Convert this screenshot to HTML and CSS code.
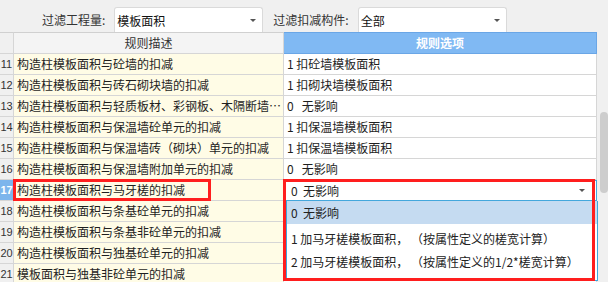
FILE: index.html
```html
<!DOCTYPE html>
<html lang="zh-CN">
<head>
<meta charset="utf-8">
<title>扣减规则</title>
<link rel="stylesheet" href="styles.css">
</head>
<body>
<div class="topbar">
  <span class="label">过滤工程量:</span>
  <div class="combo"><span>模板面积</span><i class="caret"></i></div>
  <span class="label">过滤扣减构件:</span>
  <div class="combo"><span>全部</span><i class="caret"></i></div>
</div>
<div class="main">
  <div class="grid">
    <div class="cell num hd"></div>
    <div class="cell hd hd-desc">规则描述</div>
    <div class="cell hd hd-opt">规则选项</div>

    <div class="cell num">11</div>
    <div class="cell desc">构造柱模板面积与砼墙的扣减</div>
    <div class="cell opt">1 扣砼墙模板面积</div>

    <div class="cell num">12</div>
    <div class="cell desc">构造柱模板面积与砖石砌块墙的扣减</div>
    <div class="cell opt">1 扣砌块墙模板面积</div>

    <div class="cell num">13</div>
    <div class="cell desc">构造柱模板面积与轻质板材、彩钢板、木隔断墙的扣减</div>
    <div class="cell opt">0   无影响</div>

    <div class="cell num">14</div>
    <div class="cell desc">构造柱模板面积与保温墙砼单元的扣减</div>
    <div class="cell opt">1 扣保温墙模板面积</div>

    <div class="cell num">15</div>
    <div class="cell desc">构造柱模板面积与保温墙砖（砌块）单元的扣减</div>
    <div class="cell opt">1 扣保温墙模板面积</div>

    <div class="cell num">16</div>
    <div class="cell desc">构造柱模板面积与保温墙附加单元的扣减</div>
    <div class="cell opt">0   无影响</div>

    <div class="cell num active">17</div>
    <div class="cell desc">构造柱模板面积与马牙槎的扣减</div>
    <div class="cell opt editing"><div class="edit"><span class="edit-text">0  无影响</span><i class="caret"></i></div></div>

    <div class="cell num">18</div>
    <div class="cell desc">构造柱模板面积与条基砼单元的扣减</div>
    <div class="cell opt">1 扣条基模板面积</div>

    <div class="cell num">19</div>
    <div class="cell desc">构造柱模板面积与条基非砼单元的扣减</div>
    <div class="cell opt">0   无影响</div>

    <div class="cell num">20</div>
    <div class="cell desc">构造柱模板面积与独基砼单元的扣减</div>
    <div class="cell opt">1 扣独基模板面积</div>

    <div class="cell num">21</div>
    <div class="cell desc">模板面积与独基非砼单元的扣减</div>
    <div class="cell opt">0   无影响</div>
  </div>
  <div class="scroll"><div class="thumb"></div></div>

  <ul class="list">
    <li class="item sel">0  无影响</li>
    <li class="item gap">1 加马牙槎模板面积， （按属性定义的槎宽计算）</li>
    <li class="item">2 加马牙槎模板面积， （按属性定义的1/2*槎宽计算）</li>
  </ul>
  <div class="mark mark-left"></div>
  <div class="mark mark-right"></div>
</div>
</body>
</html>
```
FILE: styles.css
```css
html, body {
  margin: 0;
  padding: 0;
}
body {
  width: 608px;
  height: 282px;
  overflow: hidden;
  background: #f0f0f0;
  font-family: "Noto Sans CJK SC", "Noto Sans", sans-serif;
  font-size: 12px;
  color: #1e1e1e;
}

/* top filter bar */
.topbar {
  height: 32px;
  box-sizing: border-box;
  padding: 7px 0 0 42px;
  display: flex;
  align-items: flex-start;
}
.label {
  line-height: 25px;
  color: #333;
  margin-right: 9px;
}
.combo {
  width: 149px;
  height: 25px;
  box-sizing: border-box;
  background: #fff;
  border: 1px solid #dadada;
  border-bottom: none;
  border-radius: 3px 3px 0 0;
  display: flex;
  align-items: center;
  justify-content: space-between;
  padding: 0 6px 0 2px;
  margin-right: 10px;
  color: #111;
}
.caret {
  width: 0;
  height: 0;
  border-left: 3px solid transparent;
  border-right: 3px solid transparent;
  border-top: 3px solid #555;
}

/* grid area */
.main {
  position: relative;
  display: flex;
  height: 250px;
  overflow: hidden;
}
.grid {
  width: 597px;
  display: grid;
  grid-template-columns: 14px 270px 313px;
  grid-template-rows: 22px;
  grid-auto-rows: 21px;
  align-content: start;
}
.cell {
  box-sizing: border-box;
  border-right: 1px solid #d6d6d6;
  border-bottom: 1px solid #d6d6d6;
  line-height: 20px;
  white-space: pre;
  overflow: hidden;
  text-overflow: ellipsis;
  padding-left: 3px;
}
.hd {
  border-top: 1px solid #d0d0d0;
  line-height: 20px;
}
.num {
  background: #f0f0f0;
  padding: 0;
  text-align: center;
  font-family: "Liberation Sans", sans-serif;
  font-size: 11px;
  color: #333;
  text-overflow: clip;
}
.num.active {
  background: #7db5ec;
  color: #fff;
  font-weight: bold;
}
.hd-desc {
  background: #f4f4f4;
  text-align: center;
  color: #333;
  padding: 0;
}
.hd-opt {
  background: #80b9f3;
  border-color: #6aa6e6;
  color: #fff;
  font-weight: bold;
  text-align: center;
  padding: 0;
}
.desc {
  background: #fffce6;
}
.opt {
  background: #fff;
  padding-left: 3px;
}
.editing {
  padding: 0 0 0 1px;
  border: none;
  white-space: normal;
  overflow: visible;
}
.edit {
  height: 21px;
  box-sizing: border-box;
  border: 1px solid #44a7dc;
  background: #fff;
  display: flex;
  align-items: center;
  justify-content: space-between;
  padding: 0 11px 0 5px;
}
.edit-text {
  white-space: pre;
}

/* scrollbar */
.scroll {
  width: 11px;
  background: #f0f0f0;
}
.thumb {
  margin: 80px 0 0 3px;
  width: 8px;
  height: 81px;
  background: #cdcdcd;
  border-radius: 4px;
}

/* dropdown list overlay */
.list {
  position: absolute;
  left: 286px;
  top: 169px;
  width: 312px;
  height: 80px;
  box-sizing: border-box;
  margin: 0;
  padding: 0;
  list-style: none;
  background: #fff;
  border: 1px solid #3ea6dc;
  border-top: none;
}
.item {
  height: 23px;
  line-height: 23px;
  padding-left: 4px;
  color: #222;
  white-space: pre;
}
.item.sel {
  background: #c5dbf1;
}
.item.gap {
  margin-top: 3px;
}

/* red annotation boxes */
.mark {
  position: absolute;
  box-sizing: border-box;
  border: 3px solid #ff1e1e;
}
.mark-left {
  left: 13px;
  top: 147px;
  width: 198px;
  height: 22px;
}
.mark-right {
  left: 283px;
  top: 147px;
  width: 312px;
  height: 102px;
}
```
